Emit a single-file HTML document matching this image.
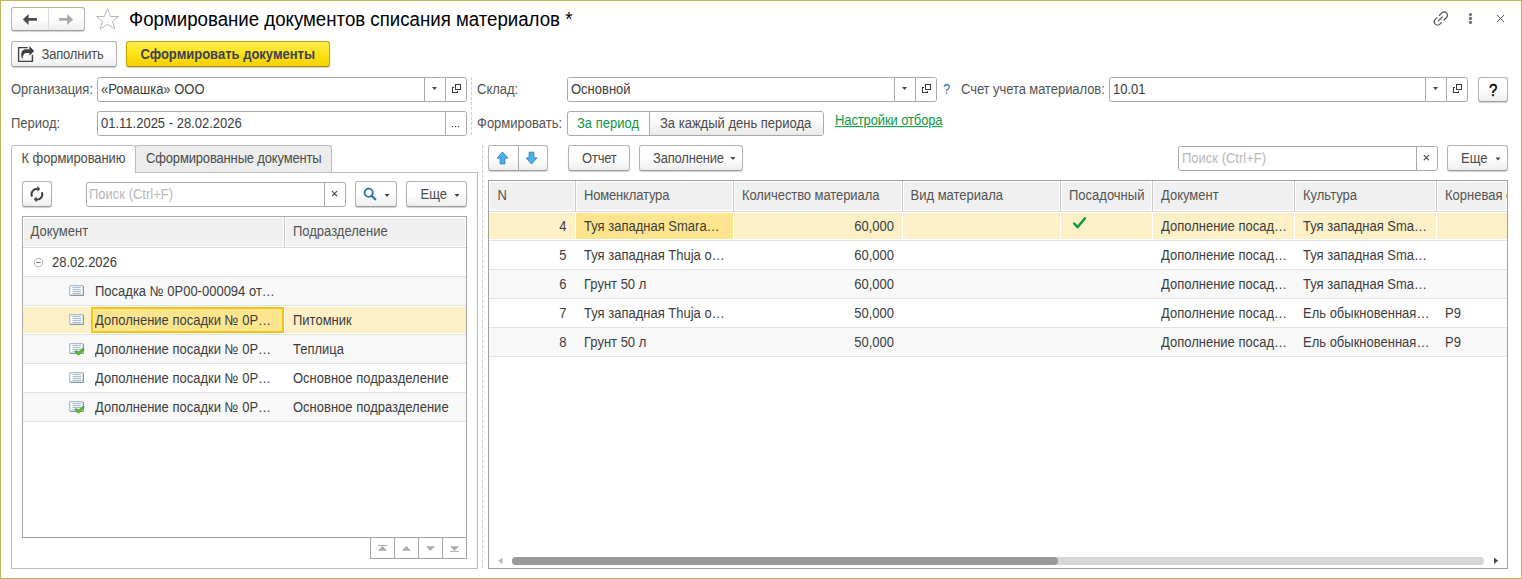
<!DOCTYPE html>
<html><head><meta charset="utf-8"><title>Формирование документов списания материалов</title>
<style>
*{box-sizing:border-box;margin:0;padding:0}
html,body{width:1522px;height:579px;overflow:hidden;background:#fff}
body{position:relative;font-family:"Liberation Sans",sans-serif;font-size:13px;color:#333}
.a{position:absolute}
.t{position:absolute;white-space:nowrap}
.btn{position:absolute;border:1px solid #b3b3b3;border-bottom-color:#9d9d9d;border-radius:3px;background:linear-gradient(#fff 0%,#fff 50%,#eeeeee 100%);box-shadow:0 1px 1px rgba(0,0,0,.18)}
.fld{position:absolute;border:1px solid #a9a9a9;border-radius:2.5px;background:#fff}
.vl{position:absolute;width:1px;background:#a9a9a9}
</style></head>
<body>
<div class="btn" style="left:11px;top:7px;width:74px;height:24px;"></div>
<div class="a" style="left:48px;top:8px;width:1px;height:22px;background:#dcdcdc"></div>
<svg class="a" style="left:22px;top:13px" width="16" height="13" viewBox="0 0 16 13"><path d="M0.9 6.5 L6.6 0.9 V5.1 H14.9 V7.8 H6.6 V12 Z" fill="#4a4a4a"/></svg>
<svg class="a" style="left:58px;top:13px" width="16" height="13" viewBox="0 0 16 13"><path d="M15.1 6.5 L9.1 0.9 V5.1 H1 V7.8 H9.1 V12 Z" fill="#ababab"/></svg>
<svg class="a" style="left:95px;top:7px" width="25" height="24" viewBox="0 0 25 24"><path d="M12.5 1.6 L15.6 9.5 L23.6 9.5 L17.5 14.4 L20 22.2 L12.5 17.2 L5 22.2 L7.5 14.4 L1.4 9.5 L9.4 9.5 Z" fill="none" stroke="#b1b9c2" stroke-width="1" stroke-linejoin="miter"/></svg>
<div class="t" style="left:129px;top:8.53px;color:#000;font-size:18.67px;line-height:22px;transform:scaleY(1.05);transform-origin:0 17.47px">Формирование документов списания материалов *</div>
<svg class="a" style="left:1430px;top:8px" width="20" height="20" viewBox="0 0 20 20"><g transform="translate(10.9 10.4) scale(0.93) translate(-11 -10)" fill="none" stroke="#4d4d4d" stroke-width="1.25" stroke-linecap="round"><path d="M9.3 6.7 L12 4 A3.5 3.5 0 0 1 17 9 L14.3 11.7"/><path d="M6.6 9.4 L4.9 11.1 A3.5 3.5 0 0 0 9.9 16.1 L11.5 14.5"/><path d="M8.3 12.7 L12.7 8.3"/></g></svg>
<svg class="a" style="left:1467px;top:11px" width="7" height="15" viewBox="0 0 7 15"><g fill="#707070"><circle cx="3.5" cy="3.5" r="1.6"/><circle cx="3.5" cy="7.4" r="1.6"/><circle cx="3.5" cy="11.4" r="1.6"/></g></svg>
<svg class="a" style="left:1495px;top:13px" width="11" height="11" viewBox="0 0 11 11"><path d="M2 2 L9 9 M9 2 L2 9" stroke="#4d4d4d" stroke-width="0.95"/></svg>
<div class="btn" style="left:11px;top:41px;width:106px;height:26px;"></div>
<svg class="a" style="left:14px;top:43px" width="24" height="22" viewBox="0 0 24 22"><path d="M13.7 4.6 H4.6 V18.4 H18.4 V11.8" fill="none" stroke="#404040" stroke-width="1.4"/><path d="M15.4 2.9 L20.2 7.9 L15.4 12.8 V10 H12.2 C10.2 10 8.9 12 8.3 16.6 C7.1 13.2 6.6 10.2 8 8.2 C9 6.9 10.5 6.3 12.2 6.3 H15.4 Z" fill="#404040"/></svg>
<div class="t" style="left:41.5px;top:46.60px;color:#4a4a4a;font-size:13px;line-height:15px;transform:scaleY(1.08);transform-origin:0 12.00px;letter-spacing:-0.18px">Заполнить</div>
<div class="a" style="left:126px;top:41px;width:204px;height:26px;border:1px solid #c2a500;border-bottom-color:#a88e00;border-radius:3px;background:linear-gradient(#ffec50 0%,#ffe31a 45%,#f4d000 100%);box-shadow:0 1px 1px rgba(0,0,0,.2)"></div>
<div class="t" style="left:140.5px;top:47.00px;color:#3a4258;font-size:13px;line-height:15px;transform:scaleY(1.08);transform-origin:0 12.00px;font-weight:bold">Сформировать документы</div>
<div class="t" style="left:11px;top:82.00px;color:#535353;font-size:13px;line-height:15px;transform:scaleY(1.08);transform-origin:0 12.00px;">Организация:</div>
<div class="fld" style="left:97px;top:77px;width:370px;height:25px"></div>
<div class="a" style="left:424px;top:78px;width:1px;height:23px;background:#a9a9a9"></div>
<div class="a" style="left:445px;top:78px;width:1px;height:23px;background:#a9a9a9"></div>
<div class="t" style="left:101px;top:82.00px;color:#3c3c3c;font-size:13px;line-height:15px;transform:scaleY(1.08);transform-origin:0 12.00px;">«Ромашка» ООО</div>
<svg class="a" style="left:430px;top:87px" width="9" height="6" viewBox="0 0 9 6"><path d="M2.0 0.0 H7.0 L4.5 3.0 Z" fill="#444"/></svg>
<svg class="a" style="left:450px;top:82px" width="12" height="12" viewBox="0 0 12 12"><g fill="none" stroke="#3a3a3a" stroke-width="1.1" shape-rendering="crispEdges"><path d="M4 5.5 H2.5 V10.5 H7.5 V9"/><rect x="5.5" y="2.5" width="5" height="5"/></g></svg>
<div class="a" style="left:471px;top:77px;width:1px;height:59px;background:repeating-linear-gradient(#cdcdcd 0 3px,transparent 3px 5px)"></div>
<div class="t" style="left:477px;top:82.00px;color:#535353;font-size:13px;line-height:15px;transform:scaleY(1.08);transform-origin:0 12.00px;">Склад:</div>
<div class="fld" style="left:567px;top:77px;width:370px;height:25px"></div>
<div class="a" style="left:894px;top:78px;width:1px;height:23px;background:#a9a9a9"></div>
<div class="a" style="left:915px;top:78px;width:1px;height:23px;background:#a9a9a9"></div>
<div class="t" style="left:571px;top:82.00px;color:#3c3c3c;font-size:13px;line-height:15px;transform:scaleY(1.08);transform-origin:0 12.00px;">Основной</div>
<svg class="a" style="left:900px;top:87px" width="9" height="6" viewBox="0 0 9 6"><path d="M2.0 0.0 H7.0 L4.5 3.0 Z" fill="#444"/></svg>
<svg class="a" style="left:920px;top:82px" width="12" height="12" viewBox="0 0 12 12"><g fill="none" stroke="#3a3a3a" stroke-width="1.1" shape-rendering="crispEdges"><path d="M4 5.5 H2.5 V10.5 H7.5 V9"/><rect x="5.5" y="2.5" width="5" height="5"/></g></svg>
<div class="t" style="left:943px;top:82.00px;color:#1f70b8;font-size:13px;line-height:15px;transform:scaleY(1.08);transform-origin:0 12.00px;">?</div>
<div class="t" style="left:961px;top:82.00px;color:#535353;font-size:13px;line-height:15px;transform:scaleY(1.08);transform-origin:0 12.00px;letter-spacing:-0.07px">Счет учета материалов:</div>
<div class="fld" style="left:1109px;top:77px;width:359px;height:25px"></div>
<div class="a" style="left:1425px;top:78px;width:1px;height:23px;background:#a9a9a9"></div>
<div class="a" style="left:1446px;top:78px;width:1px;height:23px;background:#a9a9a9"></div>
<div class="t" style="left:1113px;top:82.00px;color:#3c3c3c;font-size:13px;line-height:15px;transform:scaleY(1.08);transform-origin:0 12.00px;">10.01</div>
<svg class="a" style="left:1431px;top:87px" width="9" height="6" viewBox="0 0 9 6"><path d="M2.0 0.0 H7.0 L4.5 3.0 Z" fill="#444"/></svg>
<svg class="a" style="left:1451px;top:82px" width="12" height="12" viewBox="0 0 12 12"><g fill="none" stroke="#3a3a3a" stroke-width="1.1" shape-rendering="crispEdges"><path d="M4 5.5 H2.5 V10.5 H7.5 V9"/><rect x="5.5" y="2.5" width="5" height="5"/></g></svg>
<div class="btn" style="left:1478px;top:77px;width:30px;height:25px;"></div>
<div class="t" style="left:1489px;top:82.30px;color:#000;font-size:15px;line-height:17px;transform:scaleY(1.08);transform-origin:0 13.70px;-webkit-text-stroke:0.35px #000">?</div>
<div class="t" style="left:11px;top:116.30px;color:#535353;font-size:13px;line-height:15px;transform:scaleY(1.08);transform-origin:0 12.00px;">Период:</div>
<div class="fld" style="left:97px;top:111px;width:370px;height:25px"></div>
<div class="a" style="left:445px;top:112px;width:1px;height:23px;background:#a9a9a9"></div>
<div class="t" style="left:101px;top:116.30px;color:#3c3c3c;font-size:13px;line-height:15px;transform:scaleY(1.08);transform-origin:0 12.00px;">01.11.2025 - 28.02.2026</div>
<svg class="a" style="left:450px;top:124px" width="12" height="4" viewBox="0 0 12 4"><g fill="#444"><rect x="2" y="2" width="1.2" height="1.2"/><rect x="5" y="2" width="1.2" height="1.2"/><rect x="8" y="2" width="1.2" height="1.2"/></g></svg>
<div class="t" style="left:477px;top:116.30px;color:#535353;font-size:13px;line-height:15px;transform:scaleY(1.08);transform-origin:0 12.00px;">Формировать:</div>
<div class="a" style="left:567px;top:111px;width:257px;height:25px;border:1px solid #a9a9a9;border-radius:3px;background:#fff;overflow:hidden"><div class="a" style="left:81px;top:0;width:175px;height:23px;border-left:1px solid #a9a9a9;background:linear-gradient(#fff 0%,#fafafa 45%,#e9e9e9 100%)"></div></div>
<div class="t" style="left:577px;top:115.80px;color:#119548;font-size:13px;line-height:15px;transform:scaleY(1.08);transform-origin:0 12.00px;">За период</div>
<div class="t" style="left:660px;top:115.80px;color:#4a4a4a;font-size:13px;line-height:15px;transform:scaleY(1.08);transform-origin:0 12.00px;">За каждый день периода</div>
<div class="t" style="left:835px;top:112.60px;color:#109a46;font-size:13px;line-height:15px;transform:scaleY(1.08);transform-origin:0 12.00px;text-decoration:underline;letter-spacing:-0.12px">Настройки отбора</div>
<div class="a" style="left:135px;top:145px;width:197px;height:28px;border:1px solid #bdbdbd;border-bottom:none;border-radius:3px 3px 0 0;background:#ececec"></div>
<div class="a" style="left:11px;top:172px;width:467px;height:397px;border:1px solid #bdbdbd"></div>
<div class="a" style="left:11px;top:145px;width:125px;height:28px;border:1px solid #bdbdbd;border-bottom:none;border-radius:3px 3px 0 0;background:#fff"></div>
<div class="t" style="left:21.6px;top:151.00px;color:#4a4a4a;font-size:13px;line-height:15px;transform:scaleY(1.08);transform-origin:0 12.00px;letter-spacing:-0.1px">К формированию</div>
<div class="t" style="left:146px;top:151.00px;color:#4a4a4a;font-size:13px;line-height:15px;transform:scaleY(1.08);transform-origin:0 12.00px;letter-spacing:-0.16px">Сформированные документы</div>
<div class="btn" style="left:22px;top:181px;width:30px;height:26px;"></div>
<svg class="a" style="left:29px;top:184px" width="16" height="20" viewBox="0 0 16 20"><g fill="none" stroke="#3d3d3d" stroke-width="2"><path d="M3.2 12.6 A5 5 0 0 1 8.8 5.3"/><path d="M12.8 8.2 A5 5 0 0 1 7.2 15.3"/></g><path d="M8.4 2 L11.2 4.9 L8.4 7.8 Z" fill="#3d3d3d"/><path d="M7.6 12.4 L4.8 15.3 L7.6 18.2 Z" fill="#3d3d3d"/></svg>
<div class="fld" style="left:86px;top:182px;width:260px;height:25px"></div>
<div class="a" style="left:324px;top:183px;width:1px;height:23px;background:#a9a9a9"></div>
<div class="t" style="left:89px;top:187.30px;color:#b8b8b8;font-size:13px;line-height:15px;transform:scaleY(1.08);transform-origin:0 12.00px;">Поиск (Ctrl+F)</div>
<svg class="a" style="left:330px;top:188px" width="10" height="10" viewBox="0 0 10 10"><path d="M2.3 3.3 L6.8 7.8 M6.8 3.3 L2.3 7.8" stroke="#4a4a4a" stroke-width="1.15" stroke-linecap="round"/></svg>
<div class="btn" style="left:355px;top:181px;width:42px;height:26px;"></div>
<svg class="a" style="left:362px;top:186px" width="16" height="16" viewBox="0 0 16 16"><circle cx="6.7" cy="6.7" r="4.1" fill="none" stroke="#2a74b2" stroke-width="1.8"/><path d="M9.7 9.7 L13.2 13.2" stroke="#2a74b2" stroke-width="2.3" stroke-linecap="round"/></svg>
<svg class="a" style="left:383px;top:194px" width="9" height="6" viewBox="0 0 9 6"><path d="M1.5 0.0 H6.5 L4 3.0 Z" fill="#444"/></svg>
<div class="btn" style="left:406px;top:181px;width:61px;height:26px;"></div>
<div class="t" style="left:420.5px;top:187.00px;color:#4a4a4a;font-size:13px;line-height:15px;transform:scaleY(1.08);transform-origin:0 12.00px;">Еще</div>
<svg class="a" style="left:453px;top:194px" width="9" height="6" viewBox="0 0 9 6"><path d="M1.5 0.0 H6.5 L4 3.0 Z" fill="#444"/></svg>
<div class="a" style="left:22px;top:216px;width:445px;height:322px;border:1px solid #a6a6a6;overflow:hidden" id="lt">
</div>
<div class="a" style="left:23px;top:247px;width:443px;height:1px;background:#d9d9d9"></div>
<div class="a" style="left:24px;top:218px;width:259px;height:28px;background:#f0f0f0"></div>
<div class="a" style="left:286px;top:218px;width:179px;height:28px;background:#f0f0f0"></div>
<div class="a" style="left:284px;top:217px;width:1px;height:30px;background:#c9c9c9"></div>
<div class="t" style="left:30.5px;top:224.30px;color:#535353;font-size:13px;line-height:15px;transform:scaleY(1.08);transform-origin:0 12.00px;">Документ</div>
<div class="t" style="left:293px;top:224.30px;color:#535353;font-size:13px;line-height:15px;transform:scaleY(1.08);transform-origin:0 12.00px;">Подразделение</div>
<div class="a" style="left:23px;top:248px;width:443px;height:28px;background:#fff"></div>
<div class="a" style="left:23px;top:276px;width:443px;height:1px;background:#e3e3e3"></div>
<svg class="a" style="left:33px;top:256.5px" width="11" height="11" viewBox="0 0 11 11"><circle cx="5.5" cy="5.5" r="4.3" fill="none" stroke="#b0b0b0" stroke-width="1"/><path d="M3.2 5.5 H7.8" stroke="#777" stroke-width="1.1"/></svg>
<div class="t" style="left:52px;top:255.00px;color:#3c3c3c;font-size:13px;line-height:15px;transform:scaleY(1.08);transform-origin:0 12.00px;">28.02.2026</div>
<div class="a" style="left:23px;top:277px;width:443px;height:28px;background:#f8f8f8"></div>
<div class="a" style="left:23px;top:305px;width:443px;height:1px;background:#e3e3e3"></div>
<svg class="a" style="left:68px;top:283px" width="18" height="16" viewBox="0 0 18 16"><rect x="1.7" y="2.6" width="13.6" height="9.7" rx="1" fill="#fff" stroke="#a9bac8" stroke-width="1.2"/><path d="M15.4 3.2 V12.4 H2.3" fill="none" stroke="#7f93a4" stroke-width="1"/><g stroke="#a9bccb" stroke-width="1.1"><path d="M4.4 4.6 H13"/><path d="M4.4 6.6 H13"/><path d="M4.4 8.6 H13"/><path d="M4.4 10.6 H13"/></g></svg>
<div class="t" style="left:95px;top:284.00px;color:#3c3c3c;font-size:13px;line-height:15px;transform:scaleY(1.08);transform-origin:0 12.00px;">Посадка № 0P00-000094 от…</div>
<div class="t" style="left:293px;top:284.00px;color:#3c3c3c;font-size:13px;line-height:15px;transform:scaleY(1.08);transform-origin:0 12.00px;"></div>
<div class="a" style="left:23px;top:306px;width:443px;height:28px;background:#fff"></div>
<div class="a" style="left:23px;top:307px;width:261px;height:26px;background:#fdf0c6"></div>
<div class="a" style="left:285px;top:307px;width:181px;height:26px;background:#fdf0c6"></div>
<div class="a" style="left:91px;top:307px;width:193px;height:26px;background:#fde58f;border:2px solid #f6c417"></div>
<div class="a" style="left:23px;top:334px;width:443px;height:1px;background:#e3e3e3"></div>
<svg class="a" style="left:68px;top:312px" width="18" height="16" viewBox="0 0 18 16"><rect x="1.7" y="2.6" width="13.6" height="9.7" rx="1" fill="#fff" stroke="#a9bac8" stroke-width="1.2"/><path d="M15.4 3.2 V12.4 H2.3" fill="none" stroke="#7f93a4" stroke-width="1"/><g stroke="#a9bccb" stroke-width="1.1"><path d="M4.4 4.6 H13"/><path d="M4.4 6.6 H13"/><path d="M4.4 8.6 H13"/><path d="M4.4 10.6 H13"/></g></svg>
<div class="t" style="left:95px;top:313.00px;color:#3c3c3c;font-size:13px;line-height:15px;transform:scaleY(1.08);transform-origin:0 12.00px;">Дополнение посадки № 0P…</div>
<div class="t" style="left:293px;top:313.00px;color:#3c3c3c;font-size:13px;line-height:15px;transform:scaleY(1.08);transform-origin:0 12.00px;">Питомник</div>
<div class="a" style="left:23px;top:335px;width:443px;height:28px;background:#f8f8f8"></div>
<div class="a" style="left:23px;top:363px;width:443px;height:1px;background:#e3e3e3"></div>
<svg class="a" style="left:68px;top:341px" width="18" height="16" viewBox="0 0 18 16"><rect x="1.7" y="2.6" width="13.6" height="9.7" rx="1" fill="#fff" stroke="#a9bac8" stroke-width="1.2"/><path d="M15.4 3.2 V12.4 H2.3" fill="none" stroke="#7f93a4" stroke-width="1"/><g stroke="#a9bccb" stroke-width="1.1"><path d="M4.4 4.6 H13"/><path d="M4.4 6.6 H13"/><path d="M4.4 8.6 H13"/><path d="M4.4 10.6 H13"/></g><path d="M8.3 10.6 L10.4 12.9 L15 8.4" fill="none" stroke="#3a9a1a" stroke-width="2.7" stroke-linejoin="round" stroke-linecap="round"/><path d="M8.3 10.6 L10.4 12.9 L15 8.4" fill="none" stroke="#6ac83c" stroke-width="1.1" stroke-linecap="round"/></svg>
<div class="t" style="left:95px;top:342.00px;color:#3c3c3c;font-size:13px;line-height:15px;transform:scaleY(1.08);transform-origin:0 12.00px;">Дополнение посадки № 0P…</div>
<div class="t" style="left:293px;top:342.00px;color:#3c3c3c;font-size:13px;line-height:15px;transform:scaleY(1.08);transform-origin:0 12.00px;">Теплица</div>
<div class="a" style="left:23px;top:364px;width:443px;height:28px;background:#fff"></div>
<div class="a" style="left:23px;top:392px;width:443px;height:1px;background:#e3e3e3"></div>
<svg class="a" style="left:68px;top:370px" width="18" height="16" viewBox="0 0 18 16"><rect x="1.7" y="2.6" width="13.6" height="9.7" rx="1" fill="#fff" stroke="#a9bac8" stroke-width="1.2"/><path d="M15.4 3.2 V12.4 H2.3" fill="none" stroke="#7f93a4" stroke-width="1"/><g stroke="#a9bccb" stroke-width="1.1"><path d="M4.4 4.6 H13"/><path d="M4.4 6.6 H13"/><path d="M4.4 8.6 H13"/><path d="M4.4 10.6 H13"/></g></svg>
<div class="t" style="left:95px;top:371.00px;color:#3c3c3c;font-size:13px;line-height:15px;transform:scaleY(1.08);transform-origin:0 12.00px;">Дополнение посадки № 0P…</div>
<div class="t" style="left:293px;top:371.00px;color:#3c3c3c;font-size:13px;line-height:15px;transform:scaleY(1.08);transform-origin:0 12.00px;">Основное подразделение</div>
<div class="a" style="left:23px;top:393px;width:443px;height:28px;background:#f8f8f8"></div>
<div class="a" style="left:23px;top:421px;width:443px;height:1px;background:#e3e3e3"></div>
<svg class="a" style="left:68px;top:399px" width="18" height="16" viewBox="0 0 18 16"><rect x="1.7" y="2.6" width="13.6" height="9.7" rx="1" fill="#fff" stroke="#a9bac8" stroke-width="1.2"/><path d="M15.4 3.2 V12.4 H2.3" fill="none" stroke="#7f93a4" stroke-width="1"/><g stroke="#a9bccb" stroke-width="1.1"><path d="M4.4 4.6 H13"/><path d="M4.4 6.6 H13"/><path d="M4.4 8.6 H13"/><path d="M4.4 10.6 H13"/></g><path d="M8.3 10.6 L10.4 12.9 L15 8.4" fill="none" stroke="#3a9a1a" stroke-width="2.7" stroke-linejoin="round" stroke-linecap="round"/><path d="M8.3 10.6 L10.4 12.9 L15 8.4" fill="none" stroke="#6ac83c" stroke-width="1.1" stroke-linecap="round"/></svg>
<div class="t" style="left:95px;top:400.00px;color:#3c3c3c;font-size:13px;line-height:15px;transform:scaleY(1.08);transform-origin:0 12.00px;">Дополнение посадки № 0P…</div>
<div class="t" style="left:293px;top:400.00px;color:#3c3c3c;font-size:13px;line-height:15px;transform:scaleY(1.08);transform-origin:0 12.00px;">Основное подразделение</div>
<div class="a" style="left:370px;top:537px;width:97px;height:22px;border:1px solid #a6a6a6;background:#fff"></div>
<div class="a" style="left:394px;top:538px;width:1px;height:20px;background:#a6a6a6"></div>
<div class="a" style="left:418px;top:538px;width:1px;height:20px;background:#a6a6a6"></div>
<div class="a" style="left:442px;top:538px;width:1px;height:20px;background:#a6a6a6"></div>
<svg class="a" style="left:370px;top:542px" width="24" height="12" viewBox="0 0 24 12"><path d="M8 3.5 H17" stroke="#aaa" stroke-width="1"/><path d="M12.5 4 L17 8.8 H8 Z" fill="#aaa"/></svg>
<svg class="a" style="left:394px;top:542px" width="24" height="12" viewBox="0 0 24 12"><path d="M12.4 4.1 L17 8.8 H7.8 Z" fill="#aaa"/></svg>
<svg class="a" style="left:418px;top:542px" width="24" height="12" viewBox="0 0 24 12"><path d="M7.8 4.2 H17 L12.4 8.9 Z" fill="#aaa"/></svg>
<svg class="a" style="left:442px;top:542px" width="24" height="12" viewBox="0 0 24 12"><path d="M8 4.2 H17 L12.5 8.9 Z" fill="#aaa"/><path d="M8 9.4 H17" stroke="#aaa" stroke-width="1"/></svg>
<div class="a" style="left:482px;top:145px;width:1px;height:424px;background:repeating-linear-gradient(#cdcdcd 0 3px,transparent 3px 5px)"></div>
<div class="btn" style="left:488px;top:145px;width:60px;height:26px;"></div>
<div class="a" style="left:518px;top:146px;width:1px;height:24px;background:#a9a9a9"></div>
<svg class="a" style="left:495px;top:150px" width="16" height="16" viewBox="0 0 16 16"><path d="M7.5 2 L13 8.1 H9.9 V13.9 H5.1 V8.1 H2 Z" fill="#48b2ec" stroke="#2a78b0" stroke-width="0.8" stroke-linejoin="miter"/></svg>
<svg class="a" style="left:524px;top:150px" width="16" height="16" viewBox="0 0 16 16"><path d="M7.5 14 L13 7.9 H9.9 V2.2 H5.1 V7.9 H2 Z" fill="#48b2ec" stroke="#2a78b0" stroke-width="0.8" stroke-linejoin="miter"/></svg>
<div class="btn" style="left:568px;top:145px;width:62px;height:26px;"></div>
<div class="t" style="left:582px;top:150.60px;color:#4a4a4a;font-size:13px;line-height:15px;transform:scaleY(1.08);transform-origin:0 12.00px;letter-spacing:-0.2px">Отчет</div>
<div class="btn" style="left:639px;top:145px;width:104px;height:26px;"></div>
<div class="t" style="left:653px;top:150.60px;color:#4a4a4a;font-size:13px;line-height:15px;transform:scaleY(1.08);transform-origin:0 12.00px;letter-spacing:-0.2px">Заполнение</div>
<svg class="a" style="left:729px;top:157px" width="9" height="6" viewBox="0 0 9 6"><path d="M1.5 0.0 H6.5 L4 3.0 Z" fill="#444"/></svg>
<div class="fld" style="left:1178px;top:146px;width:260px;height:25px"></div>
<div class="a" style="left:1416px;top:147px;width:1px;height:23px;background:#a9a9a9"></div>
<div class="t" style="left:1182px;top:150.80px;color:#b8b8b8;font-size:13px;line-height:15px;transform:scaleY(1.08);transform-origin:0 12.00px;">Поиск (Ctrl+F)</div>
<svg class="a" style="left:1422px;top:152px" width="10" height="10" viewBox="0 0 10 10"><path d="M2.1 3.3 L6.6 7.8 M6.6 3.3 L2.1 7.8" stroke="#4a4a4a" stroke-width="1.15" stroke-linecap="round"/></svg>
<div class="btn" style="left:1447px;top:145px;width:61px;height:26px;"></div>
<div class="t" style="left:1461px;top:150.60px;color:#4a4a4a;font-size:13px;line-height:15px;transform:scaleY(1.08);transform-origin:0 12.00px;">Еще</div>
<svg class="a" style="left:1494px;top:157px" width="9" height="6" viewBox="0 0 9 6"><path d="M1.5 0.5 H6.5 L4 3.5 Z" fill="#444"/></svg>
<div class="a" style="left:488px;top:180px;width:1020px;height:389px;border:1px solid #a0a0a0"></div>
<div class="a" style="left:489px;top:181px;width:1018px;height:30px;background:#fff"></div>
<div class="a" style="left:489px;top:211px;width:1018px;height:1px;background:#d9d9d9"></div>
<div class="a" style="left:490px;top:182px;width:84px;height:28px;background:#f0f0f0"></div>
<div class="a" style="left:577px;top:182px;width:155px;height:28px;background:#f0f0f0"></div>
<div class="a" style="left:735px;top:182px;width:166px;height:28px;background:#f0f0f0"></div>
<div class="a" style="left:904px;top:182px;width:155px;height:28px;background:#f0f0f0"></div>
<div class="a" style="left:1062px;top:182px;width:89px;height:28px;background:#f0f0f0"></div>
<div class="a" style="left:1154px;top:182px;width:139px;height:28px;background:#f0f0f0"></div>
<div class="a" style="left:1296px;top:182px;width:139px;height:28px;background:#f0f0f0"></div>
<div class="a" style="left:1438px;top:182px;width:68px;height:28px;background:#f0f0f0"></div>
<div class="a" style="left:575px;top:181px;width:1px;height:30px;background:#c9c9c9"></div>
<div class="a" style="left:733px;top:181px;width:1px;height:30px;background:#c9c9c9"></div>
<div class="a" style="left:902px;top:181px;width:1px;height:30px;background:#c9c9c9"></div>
<div class="a" style="left:1060px;top:181px;width:1px;height:30px;background:#c9c9c9"></div>
<div class="a" style="left:1152px;top:181px;width:1px;height:30px;background:#c9c9c9"></div>
<div class="a" style="left:1294px;top:181px;width:1px;height:30px;background:#c9c9c9"></div>
<div class="a" style="left:1436px;top:181px;width:1px;height:30px;background:#c9c9c9"></div>
<div class="t" style="left:497.5px;top:188.00px;color:#535353;font-size:13px;line-height:15px;transform:scaleY(1.08);transform-origin:0 12.00px;letter-spacing:0px">N</div>
<div class="t" style="left:584px;top:188.00px;color:#535353;font-size:13px;line-height:15px;transform:scaleY(1.08);transform-origin:0 12.00px;letter-spacing:-0.17px">Номенклатура</div>
<div class="t" style="left:742px;top:188.00px;color:#535353;font-size:13px;line-height:15px;transform:scaleY(1.08);transform-origin:0 12.00px;letter-spacing:-0.08px">Количество материала</div>
<div class="t" style="left:910.5px;top:188.00px;color:#535353;font-size:13px;line-height:15px;transform:scaleY(1.08);transform-origin:0 12.00px;letter-spacing:0px">Вид материала</div>
<div class="t" style="left:1069px;top:188.00px;color:#535353;font-size:13px;line-height:15px;transform:scaleY(1.08);transform-origin:0 12.00px;letter-spacing:0px">Посадочный</div>
<div class="t" style="left:1161px;top:188.00px;color:#535353;font-size:13px;line-height:15px;transform:scaleY(1.08);transform-origin:0 12.00px;letter-spacing:0px">Документ</div>
<div class="t" style="left:1303px;top:188.00px;color:#535353;font-size:13px;line-height:15px;transform:scaleY(1.08);transform-origin:0 12.00px;letter-spacing:0px">Культура</div>
<div class="t" style="left:1445px;top:188.00px;color:#535353;font-size:13px;line-height:15px;transform:scaleY(1.08);transform-origin:0 12.00px;letter-spacing:0px">Корневая система</div>
<div class="a" style="left:489px;top:212px;width:1018px;height:28px;background:#fff"></div>
<div class="a" style="left:489px;top:213px;width:86px;height:26px;background:#fdf0c6"></div>
<div class="a" style="left:576px;top:213px;width:157px;height:26px;background:#fde58f"></div>
<div class="a" style="left:734px;top:213px;width:168px;height:26px;background:#fdf0c6"></div>
<div class="a" style="left:903px;top:213px;width:157px;height:26px;background:#fdf0c6"></div>
<div class="a" style="left:1061px;top:213px;width:91px;height:26px;background:#fdf0c6"></div>
<div class="a" style="left:1153px;top:213px;width:141px;height:26px;background:#fdf0c6"></div>
<div class="a" style="left:1295px;top:213px;width:141px;height:26px;background:#fdf0c6"></div>
<div class="a" style="left:1437px;top:213px;width:70px;height:26px;background:#fdf0c6"></div>
<div class="a" style="left:489px;top:240px;width:1018px;height:1px;background:#e3e3e3"></div>
<div class="t" style="right:955.5px;top:219.00px;color:#3c3c3c;font-size:13px;line-height:15px;transform:scaleY(1.08);transform-origin:0 12.00px;">4</div>
<div class="t" style="left:584px;top:219.00px;color:#3c3c3c;font-size:13px;line-height:15px;transform:scaleY(1.08);transform-origin:0 12.00px;">Туя западная Smara…</div>
<div class="t" style="right:628px;top:219.00px;color:#3c3c3c;font-size:13px;line-height:15px;transform:scaleY(1.08);transform-origin:0 12.00px;">60,000</div>
<svg class="a" style="left:1070px;top:215px" width="18" height="16" viewBox="0 0 18 16"><path d="M4.2 8.7 L7.6 12.1 L15 3.2" fill="none" stroke="#109a48" stroke-width="2.5" stroke-linecap="round" stroke-linejoin="round"/></svg>
<div class="t" style="left:1161px;top:219.00px;color:#3c3c3c;font-size:13px;line-height:15px;transform:scaleY(1.08);transform-origin:0 12.00px;">Дополнение посад…</div>
<div class="t" style="left:1303px;top:219.00px;color:#3c3c3c;font-size:13px;line-height:15px;transform:scaleY(1.08);transform-origin:0 12.00px;">Туя западная Sma…</div>
<div class="t" style="left:1445px;top:219.00px;color:#3c3c3c;font-size:13px;line-height:15px;transform:scaleY(1.08);transform-origin:0 12.00px;"></div>
<div class="a" style="left:489px;top:241px;width:1018px;height:28px;background:#fff"></div>
<div class="a" style="left:489px;top:269px;width:1018px;height:1px;background:#e3e3e3"></div>
<div class="t" style="right:955.5px;top:248.00px;color:#3c3c3c;font-size:13px;line-height:15px;transform:scaleY(1.08);transform-origin:0 12.00px;">5</div>
<div class="t" style="left:584px;top:248.00px;color:#3c3c3c;font-size:13px;line-height:15px;transform:scaleY(1.08);transform-origin:0 12.00px;">Туя западная Thuja o…</div>
<div class="t" style="right:628px;top:248.00px;color:#3c3c3c;font-size:13px;line-height:15px;transform:scaleY(1.08);transform-origin:0 12.00px;">60,000</div>
<div class="t" style="left:1161px;top:248.00px;color:#3c3c3c;font-size:13px;line-height:15px;transform:scaleY(1.08);transform-origin:0 12.00px;">Дополнение посад…</div>
<div class="t" style="left:1303px;top:248.00px;color:#3c3c3c;font-size:13px;line-height:15px;transform:scaleY(1.08);transform-origin:0 12.00px;">Туя западная Sma…</div>
<div class="t" style="left:1445px;top:248.00px;color:#3c3c3c;font-size:13px;line-height:15px;transform:scaleY(1.08);transform-origin:0 12.00px;"></div>
<div class="a" style="left:489px;top:270px;width:1018px;height:28px;background:#f8f8f8"></div>
<div class="a" style="left:489px;top:298px;width:1018px;height:1px;background:#e3e3e3"></div>
<div class="t" style="right:955.5px;top:277.00px;color:#3c3c3c;font-size:13px;line-height:15px;transform:scaleY(1.08);transform-origin:0 12.00px;">6</div>
<div class="t" style="left:584px;top:277.00px;color:#3c3c3c;font-size:13px;line-height:15px;transform:scaleY(1.08);transform-origin:0 12.00px;">Грунт 50 л</div>
<div class="t" style="right:628px;top:277.00px;color:#3c3c3c;font-size:13px;line-height:15px;transform:scaleY(1.08);transform-origin:0 12.00px;">60,000</div>
<div class="t" style="left:1161px;top:277.00px;color:#3c3c3c;font-size:13px;line-height:15px;transform:scaleY(1.08);transform-origin:0 12.00px;">Дополнение посад…</div>
<div class="t" style="left:1303px;top:277.00px;color:#3c3c3c;font-size:13px;line-height:15px;transform:scaleY(1.08);transform-origin:0 12.00px;">Туя западная Sma…</div>
<div class="t" style="left:1445px;top:277.00px;color:#3c3c3c;font-size:13px;line-height:15px;transform:scaleY(1.08);transform-origin:0 12.00px;"></div>
<div class="a" style="left:489px;top:299px;width:1018px;height:28px;background:#fff"></div>
<div class="a" style="left:489px;top:327px;width:1018px;height:1px;background:#e3e3e3"></div>
<div class="t" style="right:955.5px;top:306.00px;color:#3c3c3c;font-size:13px;line-height:15px;transform:scaleY(1.08);transform-origin:0 12.00px;">7</div>
<div class="t" style="left:584px;top:306.00px;color:#3c3c3c;font-size:13px;line-height:15px;transform:scaleY(1.08);transform-origin:0 12.00px;">Туя западная Thuja o…</div>
<div class="t" style="right:628px;top:306.00px;color:#3c3c3c;font-size:13px;line-height:15px;transform:scaleY(1.08);transform-origin:0 12.00px;">50,000</div>
<div class="t" style="left:1161px;top:306.00px;color:#3c3c3c;font-size:13px;line-height:15px;transform:scaleY(1.08);transform-origin:0 12.00px;">Дополнение посад…</div>
<div class="t" style="left:1303px;top:306.00px;color:#3c3c3c;font-size:13px;line-height:15px;transform:scaleY(1.08);transform-origin:0 12.00px;">Ель обыкновенная…</div>
<div class="t" style="left:1445px;top:306.00px;color:#3c3c3c;font-size:13px;line-height:15px;transform:scaleY(1.08);transform-origin:0 12.00px;">P9</div>
<div class="a" style="left:489px;top:328px;width:1018px;height:28px;background:#f8f8f8"></div>
<div class="a" style="left:489px;top:356px;width:1018px;height:1px;background:#e3e3e3"></div>
<div class="t" style="right:955.5px;top:335.00px;color:#3c3c3c;font-size:13px;line-height:15px;transform:scaleY(1.08);transform-origin:0 12.00px;">8</div>
<div class="t" style="left:584px;top:335.00px;color:#3c3c3c;font-size:13px;line-height:15px;transform:scaleY(1.08);transform-origin:0 12.00px;">Грунт 50 л</div>
<div class="t" style="right:628px;top:335.00px;color:#3c3c3c;font-size:13px;line-height:15px;transform:scaleY(1.08);transform-origin:0 12.00px;">50,000</div>
<div class="t" style="left:1161px;top:335.00px;color:#3c3c3c;font-size:13px;line-height:15px;transform:scaleY(1.08);transform-origin:0 12.00px;">Дополнение посад…</div>
<div class="t" style="left:1303px;top:335.00px;color:#3c3c3c;font-size:13px;line-height:15px;transform:scaleY(1.08);transform-origin:0 12.00px;">Ель обыкновенная…</div>
<div class="t" style="left:1445px;top:335.00px;color:#3c3c3c;font-size:13px;line-height:15px;transform:scaleY(1.08);transform-origin:0 12.00px;">P9</div>
<div class="a" style="left:1508px;top:181px;width:13px;height:30px;background:#fff"></div>
<div class="a" style="left:1507px;top:180px;width:1px;height:389px;background:#a0a0a0"></div>
<svg class="a" style="left:496px;top:555px" width="10" height="12" viewBox="0 0 10 12"><path d="M6.5 2.5 V9 L2.3 5.75 Z" fill="#b5b5b5"/></svg>
<div class="a" style="left:512px;top:557px;width:972px;height:8px;border-radius:4px;background:#d6d6d6"></div>
<div class="a" style="left:512px;top:557px;width:546px;height:8px;border-radius:4px;background:#999"></div>
<svg class="a" style="left:1491px;top:555px" width="10" height="12" viewBox="0 0 10 12"><path d="M3 2.5 V9 L7.2 5.75 Z" fill="#4d4d4d"/></svg>
<div class="a" style="left:0px;top:0px;width:1522px;height:579px;border:1px solid #c5b35b"></div>
</body></html>
